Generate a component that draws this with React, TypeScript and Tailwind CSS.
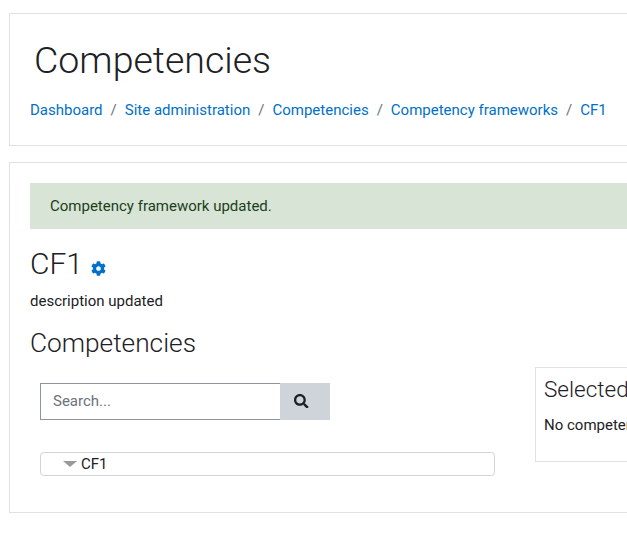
import React from 'react';
import { FaCog, FaSearch } from 'react-icons/fa';

const crumbs = ['Dashboard', 'Site administration', 'Competencies', 'Competency frameworks', 'CF1'];

export default function App() {
  return (
    <div className="w-[627px] h-[560px] overflow-hidden bg-white pl-[9px] pt-[13px] font-['Roboto',sans-serif] text-[15px] leading-[22.5px] text-[#1d2125]">
      <div className="w-[700px] h-[133px] border border-[#dee2e6] pl-[20px] pt-[20px]">
        <h1 className="pl-[4px] text-[37.5px] font-light leading-[52px]">Competencies</h1>
        <nav className="mt-[13px] flex items-center">
          {crumbs.map((crumb, i) => (
            <React.Fragment key={crumb}>
              {i > 0 && <span className="px-[8px] text-[#6a737b]">/</span>}
              <a href="#" className="text-[#0070c9]">{crumb}</a>
            </React.Fragment>
          ))}
        </nav>
      </div>

      <div className="mt-[16px] w-[700px] h-[351px] border border-[#dee2e6] pl-[20px] pt-[20px]">
        <div className="h-[46px] bg-[#d7e4d6] pl-[20px] flex items-center text-[#1c3f1a]">
          Competency framework updated.
        </div>
        <div className="mt-[14px] flex items-center">
          <h2 className="text-[30px] font-light leading-[42px]">CF1</h2>
          <FaCog className="ml-[8px] mt-[8px] text-[#0070c9] text-[15px]" />
        </div>
        <p className="mt-[5px]">description updated</p>
        <h3 className="mt-[11px] text-[26.25px] font-light leading-[39px]">Competencies</h3>

        <div className="flex items-start">
          <div className="w-[465px] pl-[10px] pt-[20px] shrink-0">
            <div className="flex h-[37px] w-[290px]">
              <input
                placeholder="Search..."
                className="w-[240px] border border-r-0 border-[#8f959e] px-[12px] outline-none placeholder:text-[#6a737b]"
              />
              <div className="flex w-[50px] items-center pl-[14px] bg-[#ced4da]">
                <FaSearch className="text-[14.5px] text-[#1d2125]" />
              </div>
            </div>
            <div className="mt-[32px] flex h-[24px] items-center rounded-[4px] border border-[#ced4da] pl-[22px]">
              <span className="mt-[1px] h-0 w-0 border-x-[7px] border-t-[6px] border-x-transparent border-t-[#999999]" />
              <span className="ml-[4px] pt-[1px]">CF1</span>
            </div>
          </div>
          <div className="ml-[40px] mt-[4px] h-[95px] w-[200px] border border-[#dee2e6] pl-[8px] pt-[7px]">
            <h4 className="text-[22.5px] font-light leading-[28px]">Selected</h4>
            <p className="mt-[11px] whitespace-nowrap">No competency selected</p>
          </div>
        </div>
      </div>
    </div>
  );
}
